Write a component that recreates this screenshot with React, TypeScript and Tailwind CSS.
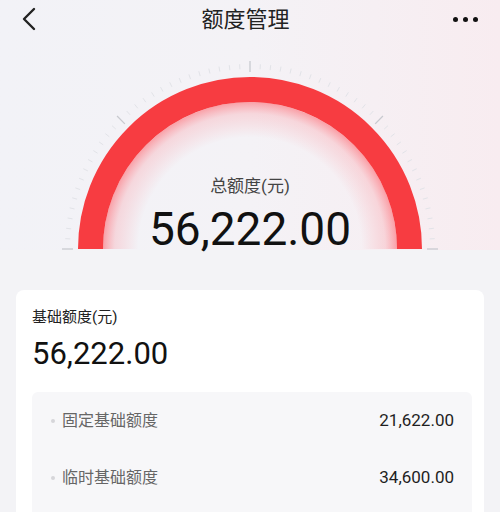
import React from 'react';

const font = { fontFamily: 'Roboto, "Noto Sans CJK SC", sans-serif' };

const ticks = Array.from({ length: 57 }, (_, i) => (i * 180) / 56);

const Gauge: React.FC = () => {
  const cx = 250;
  const cy = 211;
  return (
    <svg className="absolute left-0 top-0" width="500" height="212" viewBox="0 0 500 212">
      <defs>
        <radialGradient id="glow" cx={cx} cy={cy} r="147" gradientUnits="userSpaceOnUse">
          <stop offset="0.76" stopColor="#ff5a66" stopOpacity="0" />
          <stop offset="0.92" stopColor="#ff6b76" stopOpacity="0.2" />
          <stop offset="1" stopColor="#ff4e58" stopOpacity="0.5" />
        </radialGradient>
      </defs>
      <path d={`M ${cx - 147} ${cy} A 147 147 0 0 1 ${cx + 147} ${cy} Z`} fill="url(#glow)" />
      {ticks.map((deg, i) => {
        const a = (deg * Math.PI) / 180;
        const major = i % 14 === 0;
        const r1 = major ? 177 : 180;
        const r2 = major ? 188 : 185;
        return (
          <line
            key={i}
            x1={cx - Math.cos(a) * r1}
            y1={cy - Math.sin(a) * r1}
            x2={cx - Math.cos(a) * r2}
            y2={cy - Math.sin(a) * r2}
            stroke={major ? '#c8c9cf' : '#e2e3e8'}
            strokeWidth={major ? 1.3 : 1}
          />
        );
      })}
      <path
        d={`M ${cx - 159.5} ${cy} A 159.5 159.5 0 0 1 ${cx + 159.5} ${cy}`}
        fill="none"
        stroke="#f73c41"
        strokeWidth="25"
      />
    </svg>
  );
};

const Row: React.FC<{ label: string; value: string }> = ({ label, value }) => (
  <div className="flex h-[57px] items-center pl-[19px] pr-[18px]">
    <span className="h-[4px] w-[4px] rounded-full bg-[#d6d6da]" />
    <span className="ml-[7px] text-[16px] text-[#666666]">{label}</span>
    <span className="ml-auto text-[17px] text-[#1f1f1f]">{value}</span>
  </div>
);

export default function App() {
  return (
    <div className="h-[512px] w-[500px] overflow-hidden bg-[#f3f3f6]" style={font}>
      <div className="bg-gradient-to-r from-[#f2f2f7] via-[#f4f2f6] to-[#f8ecf0]">
        <div className="flex h-[38px] items-center justify-between px-[20px]">
          <svg width="18" height="24" viewBox="0 0 18 24">
            <path d="M14 2 L4 12 L14 22" fill="none" stroke="#222" strokeWidth="2.4" strokeLinecap="round" strokeLinejoin="round" />
          </svg>
          <div className="text-[22px] text-[#222]">额度管理</div>
          <div className="flex gap-[5px] pr-[2px]">
            <span className="h-[5px] w-[5px] rounded-full bg-[#111]" />
            <span className="h-[5px] w-[5px] rounded-full bg-[#111]" />
            <span className="h-[5px] w-[5px] rounded-full bg-[#111]" />
          </div>
        </div>
        <div className="relative h-[212px]">
          <Gauge />
          <div className="relative flex flex-col items-center pt-[136px]">
            <div className="text-[17px] leading-[24px] text-[#444]">总额度(元)</div>
            <div className="mt-[8px] text-[46px] leading-none text-[#111]">56,222.00</div>
          </div>
        </div>
      </div>

      <div className="mx-4 mt-[40px] rounded-[8px] bg-white pl-4 pr-3 pt-4">
        <div className="text-[15px] leading-[22px] text-[#222]">基础额度(元)</div>
        <div className="mt-[10px] text-[31px] leading-none text-[#111]">56,222.00</div>
        <div className="mt-[23px] rounded-[6px] bg-[#f7f7f9] pb-[30px]">
          <Row label="固定基础额度" value="21,622.00" />
          <Row label="临时基础额度" value="34,600.00" />
        </div>
      </div>
    </div>
  );
}
